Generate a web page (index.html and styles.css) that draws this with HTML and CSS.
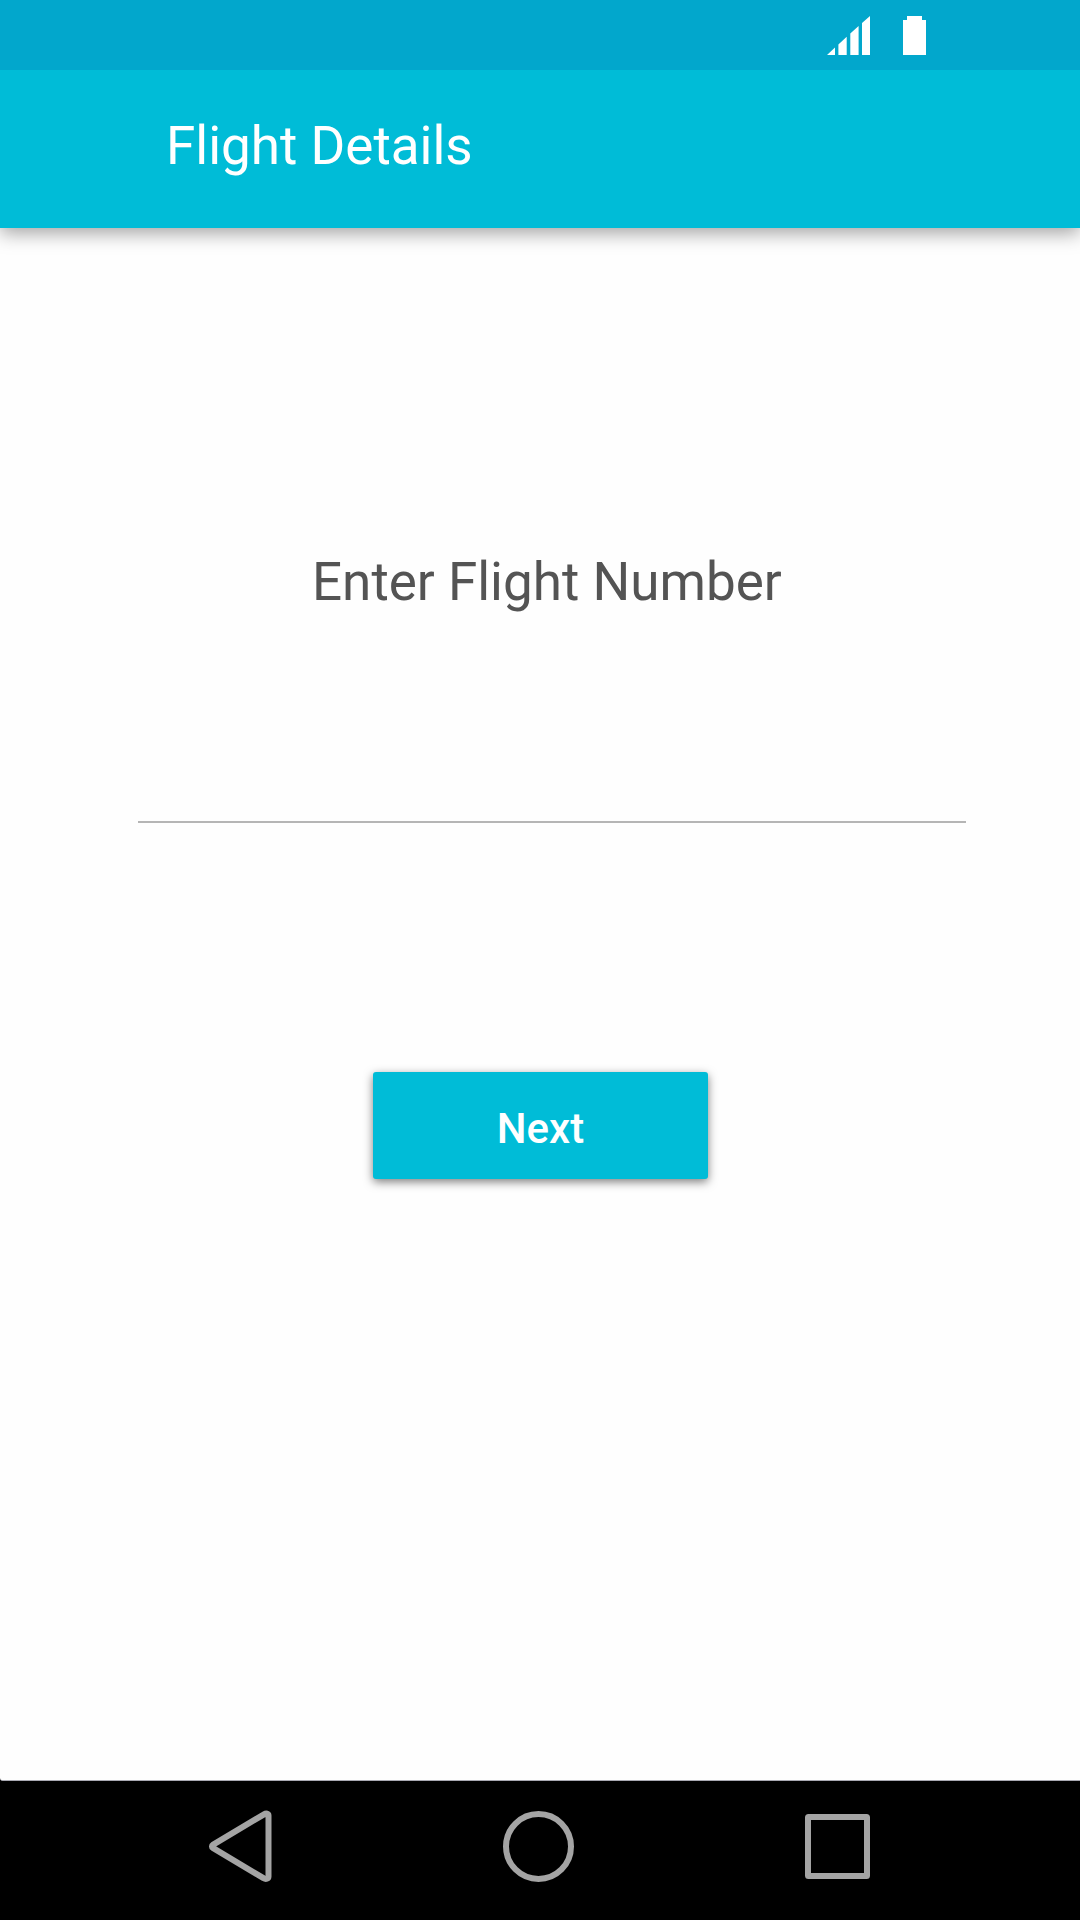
FILE: index.html
```html
<!DOCTYPE html>
<html lang="en">
<head>
<meta charset="utf-8">
<title>Flight Details</title>
<link rel="stylesheet" href="styles.css">
</head>
<body>
<div class="screen">
  <div class="status-bar">
    <svg class="signal" viewBox="0 0 43 39" aria-hidden="true"><path d="M0 39L8 31.5V39ZM11.4 39V28.4L19.7 20.8V39ZM23.3 39V17.6L31.6 10V39ZM35 39V7L43 0V39Z"/></svg>
    <svg class="battery" viewBox="0 0 23 39" aria-hidden="true"><path d="M4 0H19V4H23V39H0V4H4Z"/></svg>
  </div>
  <header class="app-bar"><h1 class="title">Flight Details</h1></header>
  <main class="content">
    <label class="prompt" for="flight">Enter Flight Number</label>
    <input class="field" id="flight" type="text">
    <button class="next" type="button">Next</button>
  </main>
  <nav class="nav-bar">
    <svg class="nav-icon" viewBox="0 0 110 110" aria-label="Back"><path d="M78.5 25.5C78.5 23.5 76.2 23 74 24.3L23.2 54.6C21.5 55.7 21.5 57.1 23.2 58.2L73.5 88.2C76 89.6 78.5 88.7 78.5 86.5Z"/></svg>
    <svg class="nav-icon" viewBox="0 0 110 110" aria-label="Home"><circle cx="48.5" cy="56.5" r="32.5"/></svg>
    <svg class="nav-icon" viewBox="0 0 110 110" aria-label="Recents"><rect x="18" y="27" width="59" height="59" rx="0.5"/></svg>
  </nav>
</div>
</body>
</html>
```
FILE: styles.css
```css
* {
  box-sizing: border-box;
}

body {
  margin: 0;
  background: #000;
  font-family: Roboto, "Liberation Sans", sans-serif;
}

.screen {
  display: flex;
  flex-direction: column;
  width: 1080px;
  height: 1920px;
  overflow: hidden;
}

.status-bar {
  z-index: 2;
  display: flex;
  flex: none;
  justify-content: flex-end;
  gap: 33px;
  height: 70px;
  padding: 16px 154px 0 0;
  background: #02a7cc;
}

.status-bar svg {
  height: 39px;
  fill: #fff;
}

.signal {
  width: 43px;
}

.battery {
  width: 23px;
}

.app-bar {
  z-index: 1;
  flex: none;
  height: 158px;
  padding: 45px 0 0 166px;
  background: #00bcd7;
  box-shadow: 0 5px 18px rgba(0, 0, 0, 0.37);
}

.title {
  margin: 0;
  color: #fff;
  font-size: 53px;
  font-weight: 400;
  line-height: 62px;
}

.content {
  display: flex;
  flex: none;
  flex-direction: column;
  height: 1553px;
  padding-top: 323px;
  background: #fefefe;
  border-bottom: 1px solid #a9a9b2;
  border-bottom-left-radius: 3px;
}

.prompt {
  margin-left: 312px;
  color: #545454;
  font-size: 53px;
  line-height: 62px;
}

.field {
  width: 828px;
  height: 90px;
  margin: 120px 0 0 138px;
  padding: 0;
  border: 0;
  border-bottom: 2px solid #b5b5b5;
  background: transparent;
  color: #545454;
  font: inherit;
  font-size: 53px;
}

.next {
  width: 335px;
  height: 107px;
  margin: 249px 0 0 373px;
  padding: 6px 0 0;
  border: 0;
  border-radius: 3px;
  background: #00bcd7;
  box-shadow: 0 3px 10px rgba(0, 0, 0, 0.5);
  color: #fff;
  font-family: inherit;
  font-size: 42px;
  font-weight: 500;
  line-height: 50px;
}

.nav-bar {
  display: flex;
  flex: 1;
  gap: 190px;
  padding: 9px 0 0 190px;
  background: #000;
}

.nav-icon {
  width: 110px;
  height: 110px;
  fill: none;
  stroke: #a4a4a4;
  stroke-width: 6;
  stroke-linejoin: round;
}
```
